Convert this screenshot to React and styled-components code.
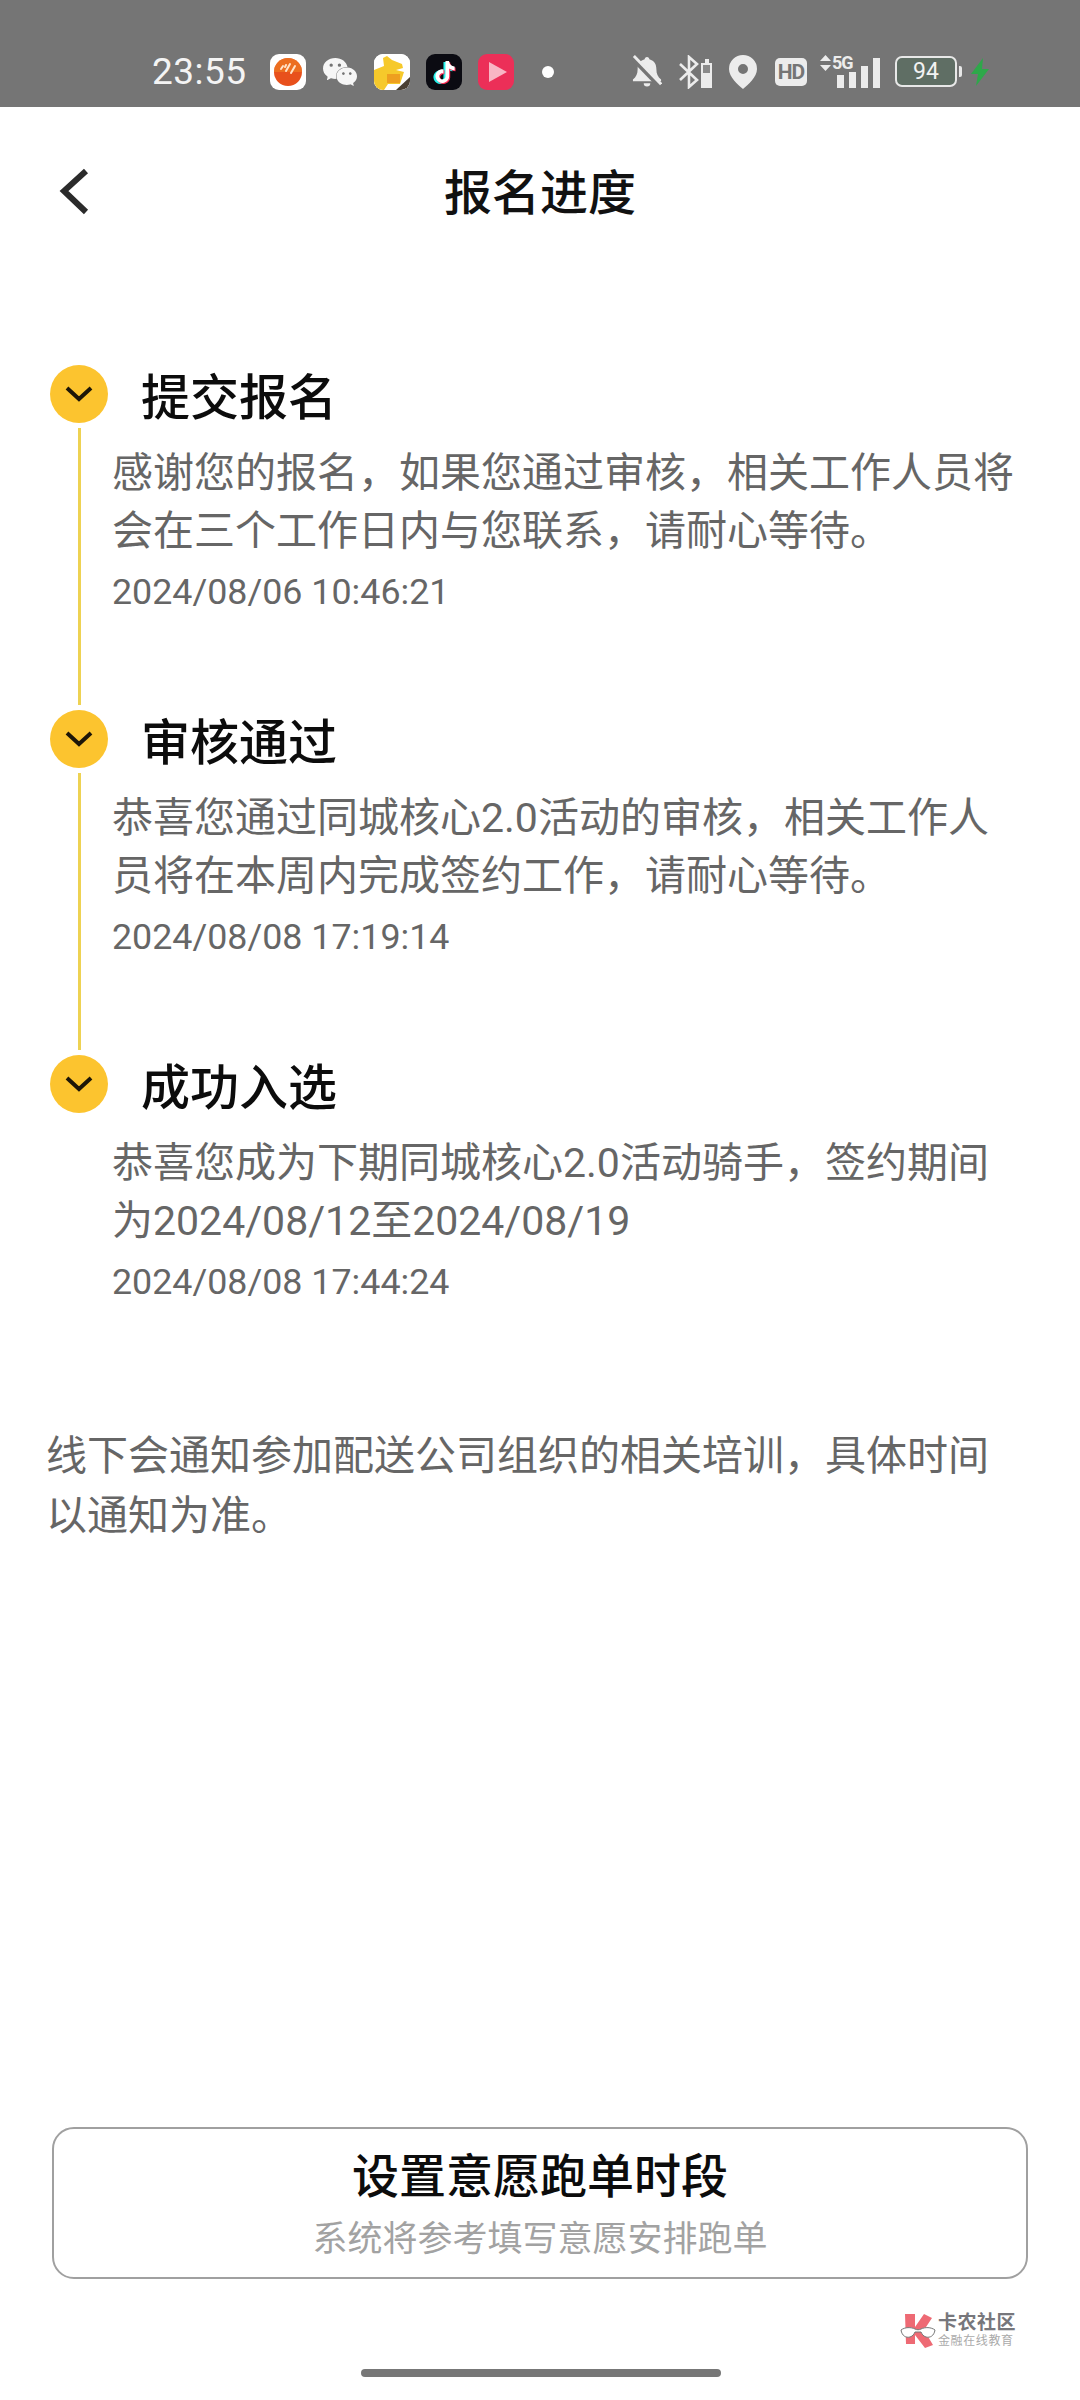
import React from 'react';
import styled, { createGlobalStyle } from 'styled-components';
import { SiTiktok, SiWechat } from 'react-icons/si';

const CJK = `Roboto, "Noto Sans CJK SC", "Noto Sans", sans-serif`;

const GlobalStyle = createGlobalStyle`
  html, body {
    margin: 0;
    padding: 0;
    background: #fff;
  }
  body {
    font-family: ${CJK};
  }
`

const Page = styled.div`
  position: relative;
  width: 1080px;
  height: 2400px;
  display: flex;
  flex-direction: column;
  background: #fff;
  overflow: hidden;
`

const StatusBar = styled.div`
  height: 107px;
  flex: none;
  display: flex;
  align-items: center;
  padding-left: 152px;
  padding-top: 36px;
  box-sizing: border-box;
  background: #757575;
  color: #f4f4f4;
`

const Clock = styled.div`
  width: 96px;
  font-size: 37px;
  font-family: Roboto, sans-serif;
  letter-spacing: 0.5px;
`

const AppIcons = styled.div`
  display: flex;
  gap: 16px;
  margin-left: 22px;
`

const AppIcon = styled.div`
  position: relative;
  width: 36px;
  height: 36px;
  border-radius: 9px;
  overflow: hidden;
  display: flex;
  align-items: center;
  justify-content: center;
  background: ${props => props.$bg || 'transparent'};
`

const TikTokLayer = styled(SiTiktok)`
  position: absolute;
  left: ${props => props.$x}px;
  top: ${props => props.$y}px;
  color: ${props => props.$color};
`

const Dot = styled.div`
  width: 12px;
  height: 12px;
  margin-left: 28px;
  border-radius: 50%;
  background: #fff;
`

const SysIcons = styled.div`
  display: flex;
  align-items: center;
  margin-left: 78px;
`

const SysIcon = styled.div`
  width: ${props => props.$w}px;
  margin-right: ${props => props.$gap || 0}px;
  display: flex;
  align-items: center;
  justify-content: center;
`

const HdBadge = styled.div`
  width: 32px;
  height: 28px;
  border-radius: 5px;
  background: #ececec;
  color: #757575;
  font-size: 21px;
  font-weight: 700;
  font-family: Roboto, sans-serif;
  line-height: 28px;
  text-align: center;
  letter-spacing: -1px;
`

const Signal = styled.div`
  position: relative;
  width: 60px;
  height: 32px;
  display: flex;
  align-items: flex-end;
  justify-content: flex-end;
  gap: 5px;
`

const SignalBar = styled.div`
  width: 7px;
  height: ${props => props.$h}px;
  background: #ececec;
`

const FiveG = styled.div`
  position: absolute;
  left: 12px;
  top: -3px;
  font-size: 18px;
  font-weight: 700;
  letter-spacing: -1px;
  line-height: 20px;
  color: #ececec;
`

const UpDown = styled.svg`
  position: absolute;
  left: 0;
  top: -1px;
`

const Battery = styled.div`
  position: relative;
  width: 62px;
  height: 31px;
  box-sizing: border-box;
  border: 2px solid #e8e8e8;
  border-radius: 7px;
  background: #5f6e64;
  color: #f2f2f2;
  font-size: 23px;
  line-height: 27px;
  text-align: center;
`

const BatteryCap = styled.div`
  position: absolute;
  right: -7px;
  top: 8px;
  width: 3px;
  height: 11px;
  border-radius: 0 2px 2px 0;
  background: #e8e8e8;
`

const Header = styled.header`
  position: relative;
  height: 170px;
  flex: none;
  display: flex;
  align-items: center;
  justify-content: center;
`

const BackButton = styled.div`
  position: absolute;
  left: 58px;
  top: 60px;
  width: 34px;
  height: 50px;
`

const Title = styled.h1`
  margin: 0 0 6px;
  font-size: 48px;
  font-weight: 500;
  color: #111;
`

const Timeline = styled.div`
  margin-top: 88px;
  padding-left: 50px;
`

const Step = styled.div`
  display: flex;
  height: 345px;
`

const Marker = styled.div`
  width: 58px;
  flex: none;
  display: flex;
  flex-direction: column;
  align-items: center;
`

const Circle = styled.div`
  width: 58px;
  height: 58px;
  flex: none;
  border-radius: 50%;
  background: #fcc42f;
  display: flex;
  align-items: center;
  justify-content: center;
`

const Line = styled.div`
  flex: 1;
  width: 3px;
  margin: 5px 0 5px;
  background: #eed252;
`

const Content = styled.div`
  padding-left: 4px;
`

const StepTitle = styled.div`
  margin: 5px 0 16px 29px;
  font-size: 49px;
  font-weight: 500;
  line-height: 58px;
  color: #0c0c0c;
`

const Body = styled.div`
  font-size: 41px;
  line-height: 58px;
  color: #666;
  white-space: pre-line;
`

const Time = styled.div`
  margin-top: 12px;
  font-size: 35.8px;
  line-height: 40px;
  color: #666;
`

const Note = styled.div`
  margin: 26px 0 0 46px;
  font-size: 41px;
  line-height: 60px;
  color: #666;
  white-space: pre-line;
`

const ActionCard = styled.div`
  width: 976px;
  height: 152px;
  margin: auto 0 0 52px;
  padding-top: 2px;
  box-sizing: border-box;
  border: 2px solid #a0a0a0;
  border-radius: 22px;
  display: flex;
  flex-direction: column;
  align-items: center;
  justify-content: center;
  gap: 8px;
`

const ActionTitle = styled.div`
  font-size: 47px;
  font-weight: 500;
  line-height: 64px;
  color: #0c0c0c;
`

const ActionHint = styled.div`
  font-size: 35px;
  line-height: 46px;
  color: #a2a2a2;
`

const HomeIndicator = styled.div`
  width: 360px;
  height: 8px;
  margin: 90px 0 23px 361px;
  flex: none;
  border-radius: 4px;
  background: #777;
`

const Watermark = styled.div`
  position: absolute;
  left: 900px;
  top: 2312px;
  display: flex;
  align-items: center;
  gap: 2px;
`

const MarkText = styled.div`
  display: flex;
  flex-direction: column;
`

const MarkName = styled.div`
  font-size: 19px;
  font-weight: 700;
  line-height: 22px;
  letter-spacing: 0.5px;
  color: #77777c;
`

const MarkSub = styled.div`
  font-size: 12px;
  line-height: 15px;
  letter-spacing: 0.6px;
  color: #aaa;
`

const steps = [
  {
    title: '提交报名',
    body: '感谢您的报名，如果您通过审核，相关工作人员将\n会在三个工作日内与您联系，请耐心等待。',
    time: '2024/08/06 10:46:21',
  },
  {
    title: '审核通过',
    body: '恭喜您通过同城核心2.0活动的审核，相关工作人\n员将在本周内完成签约工作，请耐心等待。',
    time: '2024/08/08 17:19:14',
  },
  {
    title: '成功入选',
    body: '恭喜您成为下期同城核心2.0活动骑手，签约期间\n为2024/08/12至2024/08/19',
    time: '2024/08/08 17:44:24',
  },
];

const ShopIcon = () => (
  <svg width="36" height="36" viewBox="0 0 36 36">
    <circle cx="18" cy="18" r="14" fill="#e8501c" />
    <path d="M4 18a14 14 0 0 1 28 0z" fill="#ee7a22" opacity="0.7" />
    <path d="M11 15l2-3M16 17l4-7M21 19l4-7M15 13l1-2" stroke="#ffe3c8" strokeWidth="2" strokeLinecap="round" />
  </svg>
);

const DogIcon = () => (
  <svg width="36" height="36" viewBox="0 0 36 36">
    <rect width="36" height="36" fill="#fff" />
    <path d="M0 16 L10 12 L9 4 L13 2 L18 6 L28 10 L29 14 L22 16 L30 18 L26 30 L14 30 L10 36 L0 36z" fill="#f6c92b" />
    <rect x="13" y="20" width="13" height="9" fill="#ee9f1f" />
    <path d="M36 23 L36 36 L22 36z" fill="#4a3f32" />
  </svg>
);

const PlayIcon = () => (
  <svg width="36" height="36" viewBox="0 0 36 36">
    <path d="M11 8 L29 18 L11 28z" fill="#f8b6c4" />
  </svg>
);

const LogoMark = () => (
  <svg width="36" height="36" viewBox="0 0 36 36">
    <path d="M5 1h10v13L24 1l8 4-8 12 9 15-8 3-10-13v9H6z" fill="#ee6a74" />
    <path d="M1 17c4-3 10-3 14-1 2 1 4 1 6 0 4-2 10-2 14 1-1 6-5 8-9 7-3-1-4-3-5-5h-6c-1 2-2 4-5 5-4 1-8-1-9-7z" fill="#fff" stroke="#777" strokeWidth="1" />
  </svg>
);

const App = () => (
  <Page>
    <GlobalStyle />
    <StatusBar>
      <Clock>23:55</Clock>
      <AppIcons>
        <AppIcon $bg="#fff"><ShopIcon /></AppIcon>
        <AppIcon><SiWechat size={34} color="#f6f6f6" /></AppIcon>
        <AppIcon $bg="#fff"><DogIcon /></AppIcon>
        <AppIcon $bg="#0b0b12">
          <TikTokLayer size={22} $x={6} $y={8} $color="#25f4ee" />
          <TikTokLayer size={22} $x={9} $y={8} $color="#fe2c55" />
          <TikTokLayer size={22} $x={7.5} $y={7} $color="#fff" />
        </AppIcon>
        <AppIcon $bg="#ec2f58"><PlayIcon /></AppIcon>
      </AppIcons>
      <Dot />
      <SysIcons>
        <SysIcon $w={30} $gap={16}>
          <svg width="32" height="35" viewBox="0 0 32 35">
            <path d="M16 2c1.500 0 2.500 1 2.500 2.500C24 6 26 10 26 15c0 5 1.500 8 5 11v2H1v-2c3.500-3 5-6 5-11 0-5 2-9 7.500-10.500C13.500 3 14.500 2 16 2z" fill="#ececec" />
            <path d="M12.500 30h7a3.500 3.500 0 0 1-7 0z" fill="#ececec" />
            <path d="M1 3 L30 33" stroke="#757575" strokeWidth="6" />
            <path d="M2 1 L31 31" stroke="#ececec" strokeWidth="3" />
          </svg>
        </SysIcon>
        <SysIcon $w={34} $gap={17}>
          <svg width="34" height="34" viewBox="0 0 34 34">
            <path d="M2 9 L19 25 L11 32 L11 2 L19 9 L2 25" fill="none" stroke="#ececec" strokeWidth="2.6" />
            <rect x="23" y="8" width="11" height="25" fill="#ececec" />
            <rect x="27" y="4" width="4" height="4" fill="#ececec" />
            <rect x="25" y="10" width="7" height="8" fill="#8a8a8a" />
          </svg>
        </SysIcon>
        <SysIcon $w={28} $gap={18}>
          <svg width="28" height="34" viewBox="0 0 28 34">
            <path fillRule="evenodd" d="M14 0a14 14 0 0 1 14 14c0 8-9 16-14 20C9 30 0 22 0 14A14 14 0 0 1 14 0zm0 9a5 5 0 1 0 0 10 5 5 0 0 0 0-10z" fill="#ececec" />
          </svg>
        </SysIcon>
        <SysIcon $w={32} $gap={13}><HdBadge>HD</HdBadge></SysIcon>
        <SysIcon $w={60} $gap={15}>
          <Signal>
            <UpDown width="11" height="16" viewBox="0 0 11 16">
              <path d="M5.500 0L11 6H0zM5.500 16L0 10h11z" fill="#ececec" />
            </UpDown>
            <FiveG>5G</FiveG>
            <SignalBar $h={13} />
            <SignalBar $h={16} />
            <SignalBar $h={22} />
            <SignalBar $h={30} />
          </Signal>
        </SysIcon>
        <SysIcon $w={62} $gap={13}>
          <Battery>94<BatteryCap /></Battery>
        </SysIcon>
        <SysIcon $w={20}>
          <svg width="20" height="28" viewBox="0 0 20 28">
            <path d="M13 0 L1 16 L8 16 L6 28 L19 11 L12 11z" fill="#2ea84a" />
          </svg>
        </SysIcon>
      </SysIcons>
    </StatusBar>

    <Header>
      <BackButton>
        <svg width="34" height="50" viewBox="0 0 34 50">
          <path d="M28 4 L6 24 L28 45" fill="none" stroke="#2b2b2b" strokeWidth="6" />
        </svg>
      </BackButton>
      <Title>报名进度</Title>
    </Header>

    <Timeline>
      {steps.map((step, i) => (
        <Step key={step.title}>
          <Marker>
            <Circle>
              <svg width="28" height="18" viewBox="0 0 28 18">
                <path d="M2 3 L14 14 L26 3" fill="none" stroke="#1d1608" strokeWidth="4" />
              </svg>
            </Circle>
            {i < steps.length - 1 && <Line />}
          </Marker>
          <Content>
            <StepTitle>{step.title}</StepTitle>
            <Body>{step.body}</Body>
            <Time>{step.time}</Time>
          </Content>
        </Step>
      ))}
    </Timeline>

    <Note>{'线下会通知参加配送公司组织的相关培训，具体时间\n以通知为准。'}</Note>

    <ActionCard>
      <ActionTitle>设置意愿跑单时段</ActionTitle>
      <ActionHint>系统将参考填写意愿安排跑单</ActionHint>
    </ActionCard>
    <HomeIndicator />

    <Watermark>
      <LogoMark />
      <MarkText>
        <MarkName>卡农社区</MarkName>
        <MarkSub>金融在线教育</MarkSub>
      </MarkText>
    </Watermark>
  </Page>
);

export default App;
